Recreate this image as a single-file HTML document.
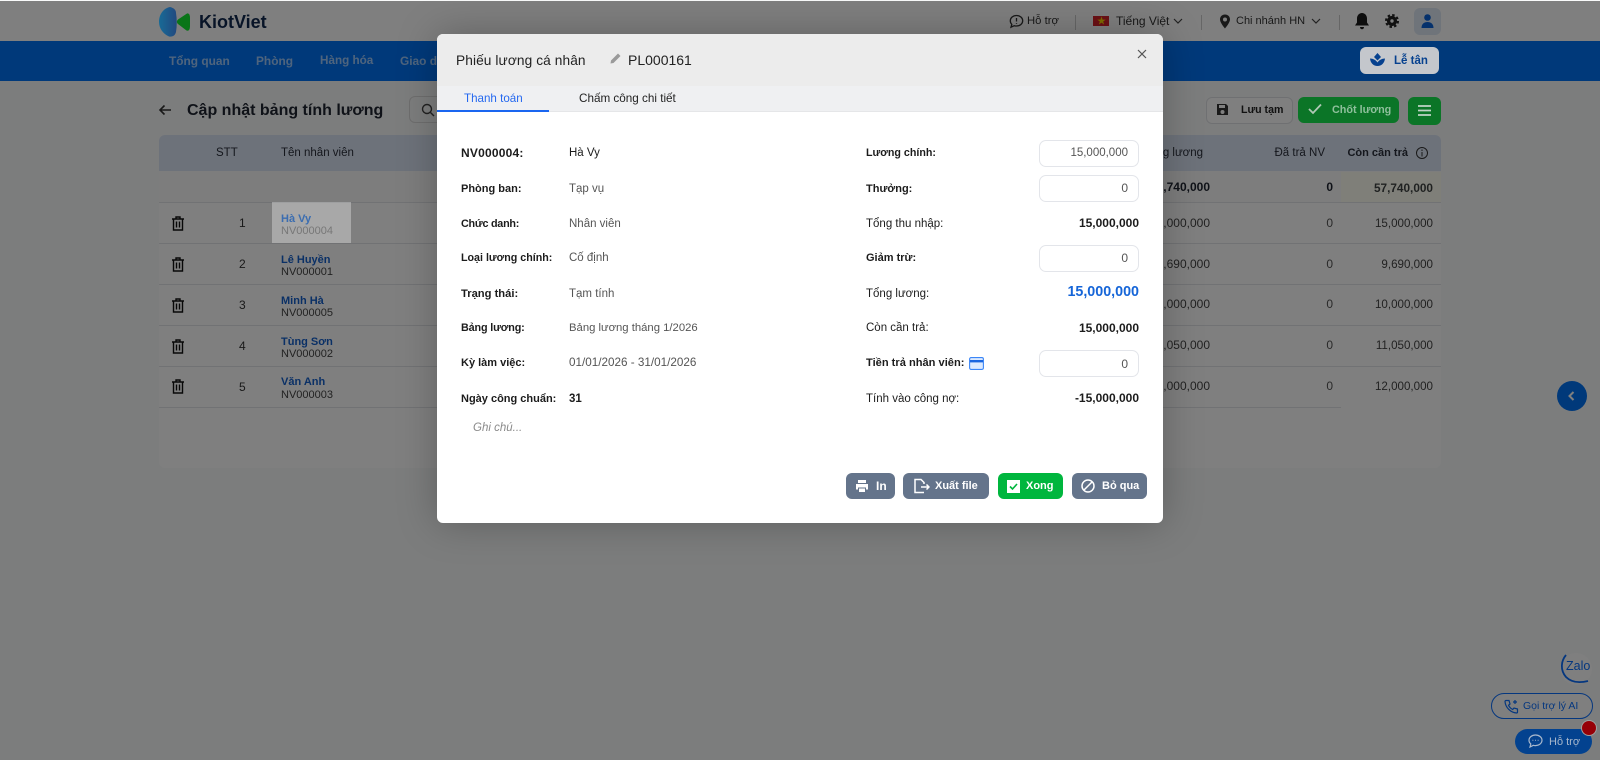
<!DOCTYPE html>
<html lang="vi">
<head>
<meta charset="utf-8">
<title>Phiếu lương cá nhân</title>
<style>
html,body{margin:0;padding:0;width:1600px;height:760px;overflow:hidden;background:#f9fafa;font-family:"Liberation Sans","Noto Sans CJK SC",sans-serif;color:#1f2430}
#page{position:absolute;left:0;top:0;width:1600px;height:760px;overflow:hidden}
.a{position:absolute}
.t{position:absolute;white-space:nowrap;line-height:16px;transform:translateY(-50%);font-size:12px}
.r{transform:translate(-100%,-50%)}
.b{font-weight:700}
.line{position:absolute;height:1px;background:#e3e5e8}
.inp{position:absolute;left:1039px;width:98px;height:25px;border:1px solid #e3e5ea;border-radius:7px;background:#fff}
.btn{position:absolute;top:473px;height:26px;border-radius:6px;background:#64748b;color:#fff;font-weight:700;font-size:11px;line-height:26px}
.l{font-size:11px;color:#1c1c1c;font-weight:700}
.v{font-size:11.5px;color:#555}
svg{position:absolute;display:block}
</style>
</head>
<body>
<div id="page">
  <!-- top bar -->
  <div class="a" style="left:0;top:1px;width:1600px;height:40px;background:#fff"></div>
  <span class="t" style="left:199px;top:22px;font-size:18px;color:#10284f;font-weight:700">KiotViet</span>

  <svg style="left:1009px;top:14px" width="15" height="15" viewBox="0 0 15 15" fill="none" stroke="#333" stroke-width="1.3"><path d="M7.5 1.5C11 1.5 13.7 3.8 13.7 6.8S11 12 7.5 12C6.7 12 6 11.9 5.3 11.7L2 13.2L2.8 10.4C1.8 9.4 1.3 8.2 1.3 6.8C1.3 3.8 4 1.5 7.5 1.5Z"/><path d="M7.5 4V7.5M7.5 9V9.8"/></svg>
  <span class="t" style="left:1027px;top:21px;font-size:11.3px;color:#333">Hỗ trợ</span>
  <div class="a" style="left:1075px;top:15px;width:1px;height:15px;background:#ccc"></div>
  <div class="a" style="left:1093px;top:16px;width:16px;height:10px;background:#d8232a"></div>
  <span class="a" style="left:1097px;top:16px;font-size:9px;line-height:10px;color:#ffd800">★</span>
  <span class="t" style="left:1116px;top:21px;font-size:12px;color:#333">Tiếng Việt</span>
  <svg style="left:1173px;top:17px" width="10" height="8" viewBox="0 0 10 8" fill="none" stroke="#444" stroke-width="1.2"><path d="M1 2L5 6L9 2"/></svg>
  <div class="a" style="left:1201px;top:15px;width:1px;height:15px;background:#ccc"></div>
  <svg style="left:1219px;top:14px" width="12" height="15" viewBox="0 0 12 15"><path d="M6 .5C9 .5 11 2.7 11 5.4C11 8.8 6 14.5 6 14.5S1 8.8 1 5.4C1 2.7 3 .5 6 .5ZM6 3.5A2 2 0 1 0 6 7.5A2 2 0 1 0 6 3.5Z" fill="#333" fill-rule="evenodd"/></svg>
  <span class="t" style="left:1236px;top:21px;font-size:11px;color:#333">Chi nhánh HN</span>
  <svg style="left:1311px;top:17px" width="10" height="8" viewBox="0 0 10 8" fill="none" stroke="#444" stroke-width="1.2"><path d="M1 2L5 6L9 2"/></svg>
  <div class="a" style="left:1339px;top:15px;width:1px;height:15px;background:#ccc"></div>
  <svg style="left:1354px;top:12px" width="16" height="18" viewBox="0 0 16 18"><path d="M8 1C11 1 13 3.5 13 6.5V10.5L15 13.5H1L3 10.5V6.5C3 3.5 5 1 8 1ZM6 15H10C10 16.5 9 17.3 8 17.3S6 16.5 6 15Z" fill="#1a1a1a"/></svg>
  <svg style="left:1385px;top:14px" width="14" height="14" viewBox="0 0 14 14" fill="none" stroke="#222"><circle cx="7" cy="7" r="3.4" stroke-width="3.4"/><circle cx="7" cy="7" r="6" stroke-width="2" stroke-dasharray="2.5 2.21"/></svg>
  <div class="a" style="left:1414px;top:8px;width:27px;height:27px;border-radius:6px;background:#dfe8f5"></div>
  <svg style="left:1420px;top:13px" width="15" height="16" viewBox="0 0 15 16"><circle cx="7.5" cy="4.5" r="3.3" fill="#0b63d8"/><path d="M1.5 15C1.5 11 4 9 7.5 9S13.5 11 13.5 15Z" fill="#0b63d8"/></svg>

  <!-- nav -->
  <div class="a" style="left:0;top:41px;width:1600px;height:40px;background:#0072f4"></div>
  <span class="t b" style="left:169px;top:61px;color:#fff;opacity:.62;font-size:11.9px">Tổng quan</span>
  <span class="t b" style="left:256px;top:61px;color:#fff;opacity:.62;font-size:11.9px">Phòng</span>
  <span class="t b" style="left:320px;top:61px;color:#fff;opacity:.62;font-size:11.7px">Hàng hóa</span>
  <span class="t b" style="left:400px;top:61px;color:#fff;opacity:.62;font-size:11.9px">Giao dịch</span>

  <!-- title row -->
  <svg style="left:158px;top:104px" width="14" height="12" viewBox="0 0 14 12" fill="none" stroke="#333" stroke-width="1.6"><path d="M13 6H2M6.5 1.5L2 6L6.5 10.5"/></svg>
  <span class="t b" style="left:187px;top:111px;font-size:16px;color:#1f2430">Cập nhật bảng tính lương</span>
  <div class="a" style="left:409px;top:96px;width:60px;height:25px;border:1px solid #ddd;border-radius:6px"></div>
  <svg style="left:421px;top:103px" width="14" height="14" viewBox="0 0 14 14" fill="none" stroke="#444" stroke-width="1.4"><circle cx="6" cy="6" r="4.5"/><path d="M9.5 9.5L13 13"/></svg>

  <div class="a" style="left:1206px;top:97px;width:85px;height:25px;border:1px solid #dfe1e5;border-radius:6px;background:#fff"></div>
  <svg style="left:1216px;top:103px" width="13" height="13" viewBox="0 0 13 13"><path d="M1 1H10L12 3V12H1ZM3 2V5H9V2ZM6.5 7A2 2 0 1 0 6.5 11A2 2 0 1 0 6.5 7Z" fill="#333" fill-rule="evenodd"/></svg>
  <span class="t b" style="left:1241px;top:110px;font-size:10.6px;color:#222">Lưu tạm</span>

  <!-- table -->
  <div class="a" style="left:159px;top:135px;width:1282px;height:333px;background:#fff;border-radius:6px;overflow:hidden">
    <div class="a" style="left:0;top:0;width:1282px;height:36px;background:#dbe5f5"></div>
  </div>
  <div class="a" style="left:159px;top:171px;width:1282px;height:31px;background:#fbfbfb"></div>
  <div class="line" style="left:159px;top:202px;width:1282px"></div>
  <div class="line" style="left:159px;top:243px;width:1282px"></div>
  <div class="line" style="left:159px;top:284px;width:1282px"></div>
  <div class="line" style="left:159px;top:325px;width:1282px"></div>
  <div class="line" style="left:159px;top:366px;width:1282px"></div>
  <div class="line" style="left:159px;top:407px;width:1182px"></div>

  <span class="t" style="left:216px;top:153px;font-size:11.5px;color:#2a2f3a">STT</span>
  <span class="t" style="left:281px;top:153px;font-size:11.5px;color:#2a2f3a">Tên nhân viên</span>
  <span class="t r" style="left:1203px;top:153px;font-size:11.5px;color:#2a2f3a">Tổng lương</span>
  <span class="t r" style="left:1325px;top:153px;font-size:11.5px;color:#2a2f3a">Đã trả NV</span>
  <span class="t r b" style="left:1408px;top:153px;font-size:11px;color:#2a2f3a">Còn cần trả</span>
  <svg style="left:1415px;top:146px" width="14" height="14" viewBox="0 0 14 14" fill="none" stroke="#333" stroke-width="1"><circle cx="7" cy="7" r="5.5"/><path d="M7 6V10.5M7 3.5V5"/></svg>

  <span class="t r b" style="left:1210px;top:187px;color:#1f2430">57,740,000</span>
  <span class="t r b" style="left:1333px;top:187px;color:#1f2430">0</span>
  <span class="t r b" style="left:1433px;top:188px;font-size:11.8px;color:#1f2430">57,740,000</span>

  <!-- Rows -->
  <span class="t" style="left:239px;top:223px;color:#333">1</span>
  <span class="t r" style="left:1210px;top:223px;color:#444">15,000,000</span>
  <span class="t r" style="left:1333px;top:223px;color:#555">0</span>
  <span class="t r" style="left:1433px;top:224px;font-size:11.6px;color:#444">15,000,000</span>

  <span class="t" style="left:239px;top:264px;color:#333">2</span>
  <span class="t b" style="left:281px;top:260px;font-size:11px;color:#1560cc">Lê Huyền</span>
  <span class="t" style="left:281px;top:272px;font-size:11px;color:#444">NV000001</span>
  <span class="t r" style="left:1210px;top:264px;color:#444">9,690,000</span>
  <span class="t r" style="left:1333px;top:264px;color:#555">0</span>
  <span class="t r" style="left:1433px;top:265px;font-size:11.6px;color:#444">9,690,000</span>

  <span class="t" style="left:239px;top:305px;color:#333">3</span>
  <span class="t b" style="left:281px;top:301px;font-size:11px;color:#1560cc">Minh Hà</span>
  <span class="t" style="left:281px;top:313px;font-size:11px;color:#444">NV000005</span>
  <span class="t r" style="left:1210px;top:304px;color:#444">10,000,000</span>
  <span class="t r" style="left:1333px;top:304px;color:#555">0</span>
  <span class="t r" style="left:1433px;top:305px;font-size:11.6px;color:#444">10,000,000</span>

  <span class="t" style="left:239px;top:346px;color:#333">4</span>
  <span class="t b" style="left:281px;top:342px;font-size:11px;color:#1560cc">Tùng Sơn</span>
  <span class="t" style="left:281px;top:354px;font-size:11px;color:#444">NV000002</span>
  <span class="t r" style="left:1210px;top:345px;color:#444">11,050,000</span>
  <span class="t r" style="left:1333px;top:345px;color:#555">0</span>
  <span class="t r" style="left:1433px;top:346px;font-size:11.6px;color:#444">11,050,000</span>

  <span class="t" style="left:239px;top:387px;color:#333">5</span>
  <span class="t b" style="left:281px;top:382px;font-size:11px;color:#1560cc">Văn Anh</span>
  <span class="t" style="left:281px;top:395px;font-size:11px;color:#444">NV000003</span>
  <span class="t r" style="left:1210px;top:386px;color:#444">12,000,000</span>
  <span class="t r" style="left:1333px;top:386px;color:#555">0</span>
  <span class="t r" style="left:1433px;top:387px;font-size:11.6px;color:#444">12,000,000</span>

  <svg style="left:171px;top:216px" width="14" height="15" viewBox="0 0 14 15" fill="none" stroke="#111" stroke-width="1.4"><path d="M1 3H13M5 3V1H9V3M2.5 3V14H11.5V3M5.5 5.5V11.5M8.5 5.5V11.5"/></svg>
  <svg style="left:171px;top:257px" width="14" height="15" viewBox="0 0 14 15" fill="none" stroke="#111" stroke-width="1.4"><path d="M1 3H13M5 3V1H9V3M2.5 3V14H11.5V3M5.5 5.5V11.5M8.5 5.5V11.5"/></svg>
  <svg style="left:171px;top:298px" width="14" height="15" viewBox="0 0 14 15" fill="none" stroke="#111" stroke-width="1.4"><path d="M1 3H13M5 3V1H9V3M2.5 3V14H11.5V3M5.5 5.5V11.5M8.5 5.5V11.5"/></svg>
  <svg style="left:171px;top:339px" width="14" height="15" viewBox="0 0 14 15" fill="none" stroke="#111" stroke-width="1.4"><path d="M1 3H13M5 3V1H9V3M2.5 3V14H11.5V3M5.5 5.5V11.5M8.5 5.5V11.5"/></svg>
  <svg style="left:171px;top:379px" width="14" height="15" viewBox="0 0 14 15" fill="none" stroke="#111" stroke-width="1.4"><path d="M1 3H13M5 3V1H9V3M2.5 3V14H11.5V3M5.5 5.5V11.5M8.5 5.5V11.5"/></svg>

  <!-- right collapse -->
  <div class="a" style="left:1557px;top:381px;width:30px;height:30px;border-radius:50%;background:#0072f4"></div>
  <svg style="left:1568px;top:391px" width="7" height="10" viewBox="0 0 7 10" fill="none" stroke="#fff" stroke-width="2"><path d="M5.5 1L1.5 5L5.5 9"/></svg>

  <!-- floating zalo / AI -->
  <div class="a" style="left:1560px;top:653px;width:32px;height:32px;border-radius:50%;background:#fff"></div>
  <svg style="left:1558px;top:652px" width="36" height="36" viewBox="0 0 36 36" fill="none" stroke="#0a6eff" stroke-width="1.8"><path d="M8 3C3 9 2 18 8 25C14 31 22 31 30 29"/></svg>
  <span class="t" style="left:1566px;top:666px;font-size:12.5px;color:#0a6eff">Zalo</span>
  <div class="a" style="left:1491px;top:693px;width:100px;height:24px;border:1px solid #0a6eff;border-radius:14px;background:#fff"></div>
  <svg style="left:1504px;top:699px" width="15" height="15" viewBox="0 0 15 15" fill="none" stroke="#0a6eff" stroke-width="1.2"><path d="M2 1.5L5 1.5L6 5L4.5 6.3C5.3 8 7 9.7 8.7 10.5L10 9L13.5 10V13C13.5 13.5 13 14 12.5 14C6.5 13.5 1.500 8.500 1 2.500C1 2 1.500 1.500 2 1.500Z"/><path d="M11 1V5M9 3H13"/></svg>
  <span class="t" style="left:1523px;top:706px;font-size:10.5px;color:#0a6eff">Gọi trợ lý AI</span>

  <!-- overlay -->
  <div class="a" style="left:0;top:1px;width:1600px;height:759px;background:rgba(0,0,0,.5)"></div>

  <!-- elements whose dimmed colours are set directly -->
  <svg style="left:157px;top:6px" width="36" height="32" viewBox="0 0 36 32">
    <defs><linearGradient id="lg" x1="0" x2="1" y1="0" y2="0"><stop offset="0" stop-color="#186a96"/><stop offset="1" stop-color="#22497f"/></linearGradient></defs>
    <path d="M13 1C17 2 19 4 19 7C20 13 20 20 19 26C18 30 15 31 12 30.5C6 28 2 22 2 16C2 8 7 2 13 1Z" fill="url(#lg)"/>
    <path d="M30 7.5C32 7 33 9 33 12V20C33 23 32 25.5 29.5 24.5L21 18C19.5 16.5 19.5 15 21 13.5Z" fill="#0a7518"/>
  </svg>
  <div class="a" style="left:1360px;top:47px;width:79px;height:27px;border-radius:6px;background:#c4c7cc"></div>
  <svg style="left:1369px;top:52px" width="17" height="16" viewBox="0 0 17 16"><path d="M8.5 1L12 5L8.5 8.500L5 5ZM1 6.500C4 6.500 7 8 8.500 10.500C10 8 13 6.500 16 6.500C15.500 11 12.500 14 8.500 14S1.500 11 1 6.500Z" fill="#06418f"/></svg>
  <span class="t b" style="left:1394px;top:61px;color:#06418f;font-size:11.5px">Lễ tân</span>

  <div class="a" style="left:1298px;top:97px;width:101px;height:26px;border-radius:6px;background:#0b7527"></div>
  <svg style="left:1308px;top:103px" width="14" height="12" viewBox="0 0 14 12" fill="none" stroke="#b0c8b6" stroke-width="1.8"><path d="M1 6L5 10L13 1.5"/></svg>
  <span class="t b" style="left:1332px;top:110px;color:#8fc09c;font-size:10.8px">Chốt lương</span>
  <div class="a" style="left:1408px;top:97px;width:33px;height:28px;border-radius:6px;background:#0b7527"></div>
  <svg style="left:1418px;top:104px" width="13" height="13" viewBox="0 0 13 13" stroke="#c0d4c6" stroke-width="1.8"><path d="M0 2H13M0 6.5H13M0 11H13"/></svg>

  <div class="a" style="left:1341px;top:172px;width:100px;height:30px;background:rgba(150,150,100,.12)"></div>
  <div class="a" style="left:272px;top:202px;width:79px;height:41px;background:rgba(255,255,255,.32)"></div>
  <span class="t b" style="left:281px;top:219px;font-size:11px;color:#3b6db0">Hà Vy</span>
  <span class="t" style="left:281px;top:231px;font-size:11px;color:#777">NV000004</span>

  <div class="a" style="left:1515px;top:729px;width:77px;height:25px;border-radius:13px;background:#03428f"></div>
  <svg style="left:1528px;top:734px" width="15" height="14" viewBox="0 0 15 14" fill="none" stroke="#a8b8cc" stroke-width="1.2"><path d="M7.500 1C11 1 14 3.300 14 6.300S11 11.600 7.500 11.600C6.700 11.600 6 11.500 5.300 11.300L2 13L2.800 10C1.600 9 1 7.800 1 6.300C1 3.300 4 1 7.500 1Z"/><path d="M4.500 6.300H5.300M7.100 6.300H7.900M9.700 6.300H10.500"/></svg>
  <span class="t" style="left:1549px;top:742px;font-size:11px;color:#a8b8cc">Hỗ trợ</span>
  <div class="a" style="left:1582px;top:721px;width:14px;height:14px;border-radius:50%;background:#960007;box-shadow:0 0 0 1px #a0a0a0"></div>

  <!-- modal -->
  <div class="a" style="left:437px;top:34px;width:726px;height:489px;background:#fff;border-radius:6px;box-shadow:0 0 40px rgba(0,0,0,.25);overflow:hidden">
    <div class="a" style="left:0;top:0;width:726px;height:52px;background:#ececec"></div>
    <div class="a" style="left:0;top:52px;width:726px;height:25px;background:#eff0f2;border-bottom:1px solid #e5e6e8"></div>
    <div class="a" style="left:0;top:76px;width:112px;height:2px;background:#1a66f0"></div>
  </div>
  <span class="t" style="left:456px;top:61px;font-size:13.7px;color:#222;letter-spacing:.1px">Phiếu lương cá nhân</span>
  <svg style="left:610px;top:53px" width="11" height="11" viewBox="0 0 11 11"><path d="M8 .5L10.5 3L3.5 10L.5 10.5L1 7.5Z" fill="#9a9a9a"/></svg>
  <span class="t" style="left:628px;top:60px;font-size:14px;color:#222">PL000161</span>
  <svg style="left:1137px;top:49px" width="10" height="10" viewBox="0 0 10 10" stroke="#555" stroke-width="1.2"><path d="M1 1L9 9M9 1L1 9"/></svg>
  <span class="t" style="left:464px;top:98.5px;font-size:11.6px;color:#2468f0">Thanh toán</span>
  <span class="t" style="left:579px;top:98.5px;font-size:11.7px;color:#222">Chấm công chi tiết</span>

  <span class="t l" style="left:461px;top:153px;font-size:12px;letter-spacing:.2px">NV000004:</span>
  <span class="t l" style="left:461px;top:189px">Phòng ban:</span>
  <span class="t l" style="left:461px;top:224px;font-size:10.8px;letter-spacing:-.25px">Chức danh:</span>
  <span class="t l" style="left:461px;top:258px;font-size:10.7px">Loại lương chính:</span>
  <span class="t l" style="left:461px;top:294px;font-size:11.2px">Trạng thái:</span>
  <span class="t l" style="left:461px;top:328px;font-size:10.8px;letter-spacing:-.15px">Bảng lương:</span>
  <span class="t l" style="left:461px;top:363px">Kỳ làm việc:</span>
  <span class="t l" style="left:461px;top:399px">Ngày công chuẩn:</span>

  <span class="t" style="left:569px;top:153px;font-size:11.5px;color:#1c1c1c">Hà Vy</span>
  <span class="t v" style="left:569px;top:189px">Tạp vụ</span>
  <span class="t v" style="left:569px;top:224px">Nhân viên</span>
  <span class="t v" style="left:569px;top:258px">Cố định</span>
  <span class="t v" style="left:569px;top:294px">Tạm tính</span>
  <span class="t v" style="left:569px;top:328px;font-size:11.3px">Bảng lương tháng 1/2026</span>
  <span class="t v" style="left:569px;top:363px;font-size:11.7px">01/01/2026 - 31/01/2026</span>
  <span class="t b" style="left:569px;top:399px;font-size:11.5px;color:#1c1c1c">31</span>
  <span class="t" style="left:473px;top:428px;font-size:11.5px;color:#8a8a8a;font-style:italic">Ghi chú...</span>

  <span class="t l" style="left:866px;top:153px;font-size:10.7px">Lương chính:</span>
  <span class="t l" style="left:866px;top:189px">Thưởng:</span>
  <span class="t" style="left:866px;top:224px;font-size:11.5px;color:#1c1c1c">Tổng thu nhập:</span>
  <span class="t l" style="left:866px;top:258px">Giảm trừ:</span>
  <span class="t" style="left:866px;top:294px;font-size:11.5px;color:#1c1c1c">Tổng lương:</span>
  <span class="t" style="left:866px;top:328px;font-size:11.5px;color:#1c1c1c">Còn cần trả:</span>
  <span class="t l" style="left:866px;top:363px;font-size:11.1px">Tiền trả nhân viên:</span>
  <span class="t" style="left:866px;top:399px;font-size:11.5px;color:#1c1c1c">Tính vào công nợ:</span>

  <div class="inp" style="top:140px"></div>
  <div class="inp" style="top:175px"></div>
  <div class="inp" style="top:245px"></div>
  <div class="inp" style="top:350px"></div>
  <span class="t r" style="left:1128px;top:153px;font-size:11.5px;color:#555">15,000,000</span>
  <span class="t r" style="left:1128px;top:188px;font-size:12px;color:#555">0</span>
  <span class="t r" style="left:1128px;top:258px;font-size:12px;color:#555">0</span>
  <span class="t r" style="left:1128px;top:363.5px;font-size:12px;color:#555">0</span>
  <span class="t r b" style="left:1139px;top:223px;font-size:12px;color:#1c1c1c">15,000,000</span>
  <span class="t r b" style="left:1139px;top:292px;font-size:14.3px;color:#1565d8">15,000,000</span>
  <span class="t r b" style="left:1139px;top:328px;font-size:12px;color:#1c1c1c">15,000,000</span>
  <span class="t r b" style="left:1139px;top:398px;font-size:12px;color:#1c1c1c">-15,000,000</span>

  <svg style="left:969px;top:357px" width="15" height="13" viewBox="0 0 15 13"><rect x=".6" y=".6" width="13.8" height="11.8" rx="1.5" fill="#dceaff" stroke="#3b86f7" stroke-width="1.1"/><rect x="1" y="3" width="13" height="2.4" fill="#1a66e0"/></svg>

  <!-- buttons -->
  <div class="btn" style="left:846px;width:49px;font-size:12px"><span class="a" style="left:30px">In</span></div>
  <svg style="left:855px;top:479px" width="14" height="14" viewBox="0 0 14 14"><path d="M3 1H11V4H3ZM1 5H13V10.5H11V8.5H3V10.5H1ZM4 9.5H10V13H4Z" fill="#fff"/></svg>
  <div class="btn" style="left:903px;width:86px"><span class="a" style="left:32px">Xuất file</span></div>
  <svg style="left:913px;top:478px" width="17" height="16" viewBox="0 0 17 16" fill="none" stroke="#fff" stroke-width="1.5"><path d="M11 14.5H2V1.5H8L11 4.5V6"/><path d="M8 9H16M13.5 6.5L16 9L13.5 11.5"/></svg>
  <div class="btn" style="left:998px;width:65px;background:#00b63e"><span class="a" style="left:28px">Xong</span></div>
  <svg style="left:1007px;top:480px" width="13" height="13" viewBox="0 0 13 13"><path d="M0 0H13V13H0Z" fill="#fff"/><path d="M3 6.5L5.5 9L10 4" fill="none" stroke="#00b63e" stroke-width="1.6"/></svg>
  <div class="btn" style="left:1072px;width:75px"><span class="a" style="left:30px">Bỏ qua</span></div>
  <svg style="left:1081px;top:479px" width="14" height="14" viewBox="0 0 14 14" fill="none" stroke="#fff" stroke-width="1.5"><circle cx="7" cy="7" r="6"/><path d="M3 11L11 3"/></svg>
</div>
</body>
</html>
